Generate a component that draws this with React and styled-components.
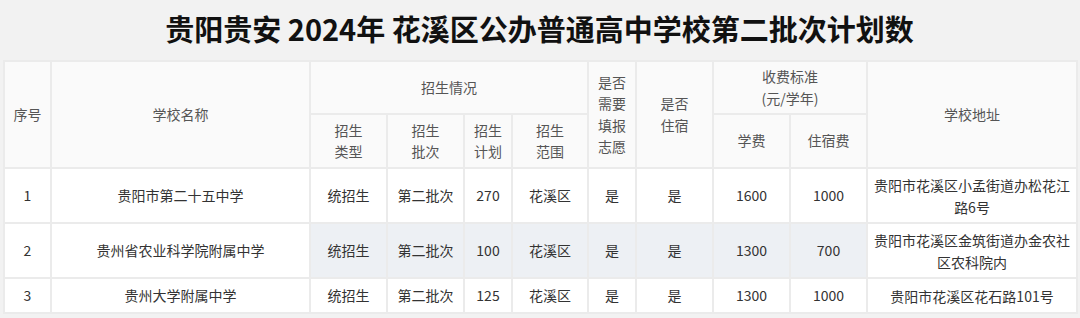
import React from "react";
import styled, { createGlobalStyle } from "styled-components";

const GlobalStyle = createGlobalStyle`
  body {
    margin: 0;
    background: #f2f2f2;
    font-family: "Noto Sans CJK SC", "Noto Sans", sans-serif;
  }
`;

const columns = [47, 259, 77, 77, 48, 76, 48, 77, 77, 77, 210];

const schools = [
  {
    id: 1,
    name: "贵阳市第二十五中学",
    type: "统招生",
    batch: "第二批次",
    plan: 270,
    area: "花溪区",
    apply: "是",
    board: "是",
    tuition: 1600,
    dorm: 1000,
    address: "贵阳市花溪区小孟街道办松花江路6号",
  },
  {
    id: 2,
    name: "贵州省农业科学院附属中学",
    type: "统招生",
    batch: "第二批次",
    plan: 100,
    area: "花溪区",
    apply: "是",
    board: "是",
    tuition: 1300,
    dorm: 700,
    address: "贵阳市花溪区金筑街道办金农社区农科院内",
    shaded: true,
  },
  {
    id: 3,
    name: "贵州大学附属中学",
    type: "统招生",
    batch: "第二批次",
    plan: 125,
    area: "花溪区",
    apply: "是",
    board: "是",
    tuition: 1300,
    dorm: 1000,
    address: "贵阳市花溪区花石路101号",
  },
];

const App = () => {
  return (
    <Page>
      <GlobalStyle />
      <Title>贵阳贵安 2024年 花溪区公办普通高中学校第二批次计划数</Title>
      <Table>
        <colgroup>
          {columns.map((w, i) => (
            <Col key={i} $w={w} />
          ))}
        </colgroup>
        <thead>
          <tr>
            <Th rowSpan={2}>序号</Th>
            <Th rowSpan={2}>学校名称</Th>
            <Th colSpan={4} $h={53}>招生情况</Th>
            <Th rowSpan={2}>
              是否<br />需要<br />填报<br />志愿
            </Th>
            <Th rowSpan={2}>
              是否<br />住宿
            </Th>
            <Th colSpan={2}>
              收费标准<br />(元/学年)
            </Th>
            <Th rowSpan={2}>学校地址</Th>
          </tr>
          <tr>
            <Th $h={54}>招生<br />类型</Th>
            <Th>招生<br />批次</Th>
            <Th>招生<br />计划</Th>
            <Th>招生<br />范围</Th>
            <Th>学费</Th>
            <Th>住宿费</Th>
          </tr>
        </thead>
        <tbody>
          {schools.map((s) => (
            <Row key={s.id} $h={s.id === 3 ? 35 : 55}>
              <Td>{s.id}</Td>
              <Td>{s.name}</Td>
              <Td $shaded={s.shaded}>{s.type}</Td>
              <Td $shaded={s.shaded}>{s.batch}</Td>
              <Td $shaded={s.shaded}>{s.plan}</Td>
              <Td $shaded={s.shaded}>{s.area}</Td>
              <Td $shaded={s.shaded}>{s.apply}</Td>
              <Td $shaded={s.shaded}>{s.board}</Td>
              <Td $shaded={s.shaded}>{s.tuition}</Td>
              <Td $shaded={s.shaded}>{s.dorm}</Td>
              <AddressTd>{s.address}</AddressTd>
            </Row>
          ))}
        </tbody>
      </Table>
    </Page>
  );
};

const Page = styled.div`
  width: 1080px;
  height: 318px;
  padding: 0 4px 0 3px;
  box-sizing: border-box;
  overflow: hidden;
`;

const Title = styled.h1`
  margin: 0;
  height: 60px;
  display: flex;
  align-items: center;
  justify-content: center;
  padding-bottom: 5px;
  box-sizing: border-box;
  font-size: 29px;
  font-weight: 700;
  color: #111;
  letter-spacing: 0;
`;

const Table = styled.table`
  width: 1073px;
  table-layout: fixed;
  border-collapse: collapse;
  font-size: 14px;
  line-height: 21.5px;
`;

const Col = styled.col`
  width: ${({ $w }) => $w}px;
`;

const Th = styled.th`
  background: #fafafa;
  border: 2px solid #ebebeb;
  color: #555;
  font-weight: 400;
  text-align: center;
  vertical-align: middle;
  padding: 0 4px;
  height: ${({ $h }) => ($h ? `${$h}px` : "auto")};
  box-sizing: border-box;
`;

const Row = styled.tr`
  height: ${({ $h }) => $h}px;
`;

const Td = styled.td`
  background: ${({ $shaded }) => ($shaded ? "#edf0f4" : "#fff")};
  border: 2px solid #ebebeb;
  color: #333;
  text-align: center;
  vertical-align: middle;
  padding: 0 4px;
`;

const AddressTd = styled(Td)`
  padding: 0 6px;
  line-height: 22px;
`;

export default App;
